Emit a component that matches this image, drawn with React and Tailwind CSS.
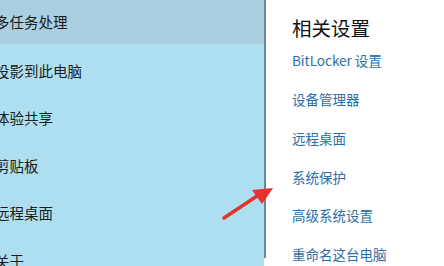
import React from 'react';

const leftItems = ['投影到此电脑', '体验共享', '剪贴板', '远程桌面', '关于'];

const links = [
  'BitLocker 设置',
  '设备管理器',
  '远程桌面',
  '系统保护',
  '高级系统设置',
  '重命名这台电脑',
];

const App = () => {
  return (
    <div
      className="relative flex w-[444px] h-[266px] overflow-hidden bg-white"
      style={{ fontFamily: '"Microsoft YaHei", "Noto Sans CJK SC", "Noto Sans", sans-serif' }}
    >
      {/* left nav */}
      <div className="w-[264px] h-full bg-[#aedff0] flex flex-col overflow-hidden">
        <div className="h-[44px] shrink-0 bg-[#a9cfe1] flex items-center text-[14.5px] text-[#1b1b1b]">
          <span className="ml-[-5px]">多任务处理</span>
        </div>
        <div className="pt-[3px] shrink-0 flex flex-col">
          {leftItems.map((item, i) => (
            <div key={i} className="h-[47.5px] shrink-0 flex items-center text-[14.5px] text-[#1b1b1b]">
              <span className="ml-[-5px]">{item}</span>
            </div>
          ))}
        </div>
      </div>

      {/* divider */}
      <div className="w-[2px] h-[258px] shrink-0 bg-[#6e8699]" />

      {/* related settings */}
      <div className="flex-1 pl-[26px] pt-[15px] flex flex-col">
        <div className="text-[19.5px] leading-[26px] text-[#111]">相关设置</div>
        <div className="flex flex-col">
          {links.map((l, i) => (
            <div key={i} className="h-[38.8px] shrink-0 flex items-center text-[13.5px] text-[#2b6ea6]">
              {l}
            </div>
          ))}
        </div>
      </div>

      {/* red arrow annotation */}
      <svg className="absolute left-[218px] top-[180px]" width="60" height="44" viewBox="0 0 60 44">
        <line x1="6" y1="38" x2="42" y2="14" stroke="#e5322d" strokeWidth="3.5" strokeLinecap="round" />
        <polygon points="55,8 34,10 44,24" fill="#e5322d" />
      </svg>
    </div>
  );
};

export default App;
